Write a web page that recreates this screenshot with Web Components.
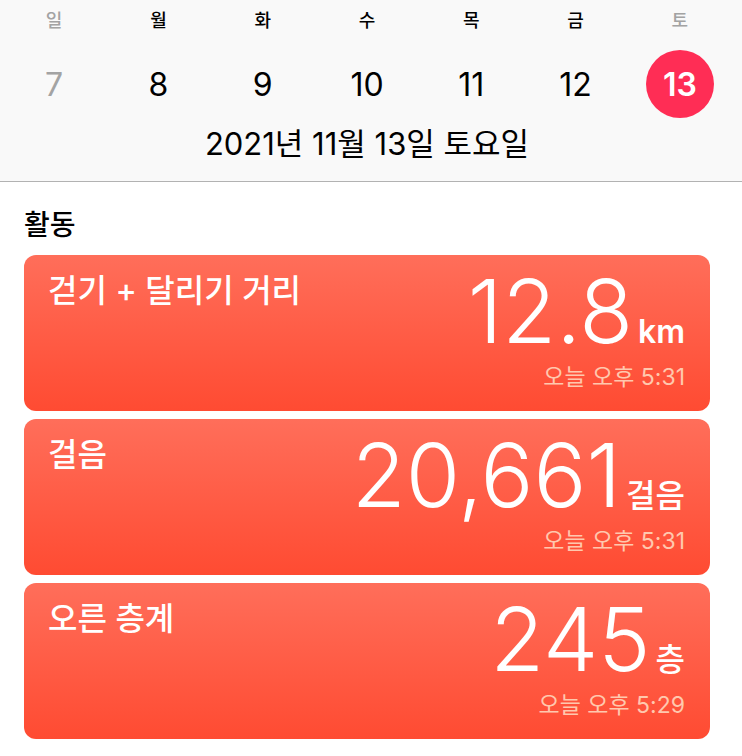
<!DOCTYPE html>
<html lang="ko">
<head>
<meta charset="utf-8">
<meta name="viewport" content="width=device-width">
<title>활동</title>
<style>
body{margin:0;background:#fff;color:#000;font-family:Inter,"Noto Sans CJK KR",sans-serif}
</style>
</head>
<body>
<health-day></health-day>
<script>
class WeekDay extends HTMLElement{
  connectedCallback(){
    const r=this.attachShadow({mode:"open"});
    r.innerHTML=`<style>
    :host{display:flex;flex-direction:column;align-items:center;color:#000}
    :host([weekend]){color:#a3a3a3}
    .name{font-size:18px;line-height:24px;font-weight:500;padding-top:9px}
    button{all:unset;box-sizing:border-box;width:68px;height:68px;margin-top:17px;border-radius:50%;text-align:center;font-size:32px;line-height:70px;cursor:pointer}
    :host([selected]) button{background:#ff2d55;color:#fff;font-weight:600}
    </style><span class="name"><slot></slot></span><button type="button">${this.getAttribute("day")}</button>`;
  }
}
customElements.define("week-day",WeekDay);
class WeekHeader extends HTMLElement{
  connectedCallback(){
    const r=this.attachShadow({mode:"open"});
    r.innerHTML=`<style>
    :host{display:block;background:#f9f9f9;border-bottom:1px solid #b2b2b2}
    .week{display:grid;grid-template-columns:repeat(7,1fr);padding:0 10px 0 2px}
    .date{text-align:center;font-size:31px;line-height:40px;padding:6px 8px 17px 0}
    </style><div class="week"><slot></slot></div><div class="date"><slot name="date"></slot></div>`;
  }
}
customElements.define("week-header",WeekHeader);
class MetricCard extends HTMLElement{
  connectedCallback(){
    const r=this.attachShadow({mode:"open"});
    r.innerHTML=`<style>
    :host{display:flex;justify-content:space-between;box-sizing:border-box;min-height:156px;padding:12px 25px 16px 24px;border-radius:12px;background:linear-gradient(#ff6e5a,#ff4b32);color:#fff}
    h2{margin:0;font-size:32px;line-height:48px;font-weight:500}
    .data{display:flex;flex-direction:column;align-items:flex-end}
    .reading{display:flex;align-items:baseline;gap:5px}
    .value{font-size:88px;line-height:88px;font-weight:300}
    .unit{font-size:32px;line-height:40px;font-weight:500}
    :host([unit="km"]) .unit{font-weight:600}
    time{font-size:23px;line-height:32px;margin-top:6px;color:#ffc8ae;font-weight:400}
    </style><h2><slot></slot></h2><div class="data"><div class="reading"><span class="value">${this.getAttribute("value")}</span><span class="unit">${this.getAttribute("unit")}</span></div><time>오늘 오후 ${this.getAttribute("time")}</time></div>`;
  }
}
customElements.define("metric-card",MetricCard);
class HealthDay extends HTMLElement{
  connectedCallback(){
    const r=this.attachShadow({mode:"open"});
    r.innerHTML=`<style>
    :host{display:block}
    main{padding:22px 32px 16px 24px}
    h1{margin:0 0 8px;font-size:28px;line-height:43px;font-weight:500}
    .cards{display:grid;gap:8px}
    </style>
    <week-header><week-day weekend day="7">일</week-day><week-day day="8">월</week-day><week-day day="9">화</week-day><week-day day="10">수</week-day><week-day day="11">목</week-day><week-day day="12">금</week-day><week-day weekend selected day="13">토</week-day><span slot="date">2021년 11월 13일 토요일</span></week-header>
    <main><h1>활동</h1><div class="cards">
    <metric-card value="12.8" unit="km" time="5:31">걷기 + 달리기 거리</metric-card>
    <metric-card value="20,661" unit="걸음" time="5:31">걸음</metric-card>
    <metric-card value="245" unit="층" time="5:29">오른 층계</metric-card>
    </div></main>`;
  }
}
customElements.define("health-day",HealthDay);
</script>
</body>
</html>
